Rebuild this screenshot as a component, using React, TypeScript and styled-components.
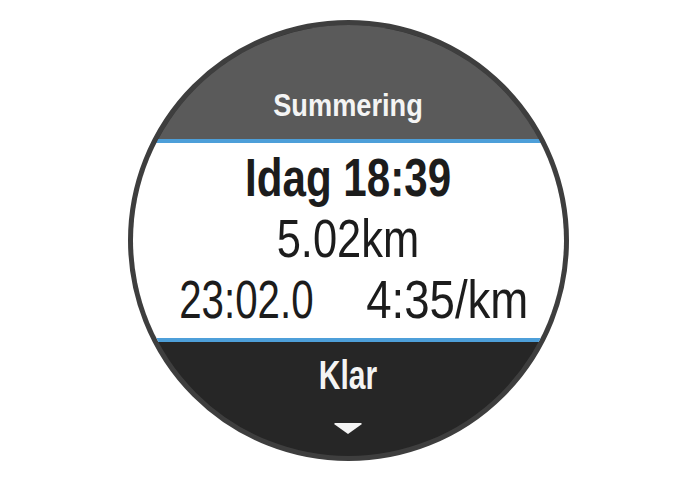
import { createGlobalStyle, styled } from 'styled-components'

const GlobalStyle = createGlobalStyle`
  html, body {
    margin: 0;
    padding: 0;
    background: #ffffff;
  }
  body {
    font-family: "Liberation Sans", Arial, sans-serif;
  }
`

function App() {
  return (
    <>
      <GlobalStyle />
      <StyledPage>
        <StyledWatch>
          <StyledHeader>
            <StyledText $size={32} $scale={0.85} $bold $light>
              Summering
            </StyledText>
          </StyledHeader>
          <StyledBody>
            <StyledText $size={54} $scale={0.78} $bold>
              Idag 18:39
            </StyledText>
            <StyledText $size={53} $scale={0.82}>
              5.02km
            </StyledText>
            <StyledRow>
              <StyledText $size={53} $scale={0.76}>
                23:02.0
              </StyledText>
              <StyledText $size={53} $scale={0.86}>
                4:35/km
              </StyledText>
            </StyledRow>
          </StyledBody>
          <StyledFooter>
            <StyledText $size={40} $scale={0.75} $bold $light>
              Klar
            </StyledText>
            <StyledArrow width="28" height="11" viewBox="0 0 28 11">
              <polygon points="1,0 27,0 28,1 14,11 0,1" fill="#f4f4f4" />
            </StyledArrow>
          </StyledFooter>
        </StyledWatch>
      </StyledPage>
    </>
  )
}

const StyledPage = styled.div`
  display: flex;
  justify-content: center;
  align-items: center;
  width: 696px;
  height: 480px;
`

const StyledWatch = styled.div`
  display: flex;
  flex-direction: column;
  width: 431px;
  height: 431px;
  border: 5px solid #3e3e3e;
  border-radius: 50%;
  overflow: hidden;
  background: #262626;
`

const StyledHeader = styled.div`
  display: flex;
  justify-content: center;
  align-items: flex-end;
  flex: 0 0 118px;
  padding-bottom: 18px;
  box-sizing: border-box;
  background: #5a5a5a;
  border-bottom: 4px solid #4d9fd9;
`

const StyledBody = styled.div`
  display: flex;
  flex-direction: column;
  align-items: center;
  flex: 0 0 199px;
  padding-top: 4px;
  box-sizing: border-box;
  background: #ffffff;
  border-bottom: 4px solid #4d9fd9;
  color: #1c1c1c;
`

const StyledText = styled.span<{
  $size: number
  $scale: number
  $bold?: boolean
  $light?: boolean
}>`
  display: inline-block;
  font-size: ${(p) => p.$size}px;
  line-height: ${(p) => (p.$light ? 1 : '61px')};
  font-weight: ${(p) => (p.$bold ? 'bold' : 'normal')};
  color: ${(p) => (p.$light ? '#f4f4f4' : '#1c1c1c')};
  white-space: nowrap;
  transform: scaleX(${(p) => p.$scale});
`

const StyledRow = styled.div`
  display: flex;
  gap: 18px;
  padding-left: 4px;
`

const StyledFooter = styled.div`
  display: flex;
  flex-direction: column;
  align-items: center;
  padding-top: 13px;
`

const StyledArrow = styled.svg`
  display: block;
  margin-top: 28px;
`

export default App
